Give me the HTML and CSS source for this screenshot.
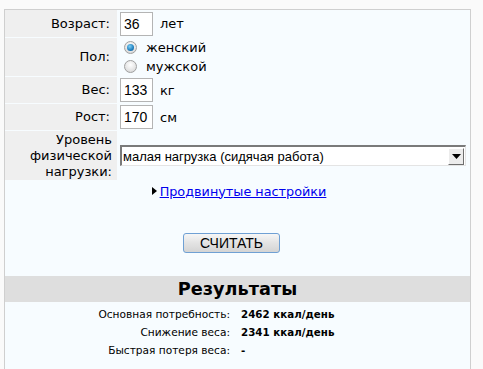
FILE: index.html
```html
<!DOCTYPE html>
<html lang="ru">
<head>
<meta charset="utf-8">
<title>Калькулятор калорий</title>
<link rel="stylesheet" href="styles.css">
</head>
<body>
<div class="panel">
  <div class="form">
    <div class="label">Возраст:</div>
    <div class="field"><span class="input">36</span><span class="unit">лет</span></div>

    <div class="label">Пол:</div>
    <div class="field radios">
      <div class="radio-row"><span class="radio checked"></span><span>женский</span></div>
      <div class="radio-row"><span class="radio"></span><span>мужской</span></div>
    </div>

    <div class="label">Вес:</div>
    <div class="field"><span class="input">133</span><span class="unit">кг</span></div>

    <div class="label">Рост:</div>
    <div class="field"><span class="input">170</span><span class="unit">см</span></div>

    <div class="label multi">Уровень<br>физической<br>нагрузки:</div>
    <div class="field">
      <div class="select"><span class="select-text">малая нагрузка (сидячая работа)</span><span class="select-btn"><svg width="9" height="5" viewBox="0 0 9 5"><polygon points="0,0 9,0 4.5,5" fill="#000"/></svg></span></div>
    </div>
  </div>

  <div class="advanced"><span class="tri"></span><a href="#" class="link">Продвинутые настройки</a></div>

  <div class="actions"><button class="btn">СЧИТАТЬ</button></div>

  <div class="results-head">Результаты</div>
  <div class="results">
    <div class="r-label">Основная потребность:</div><div class="r-value">2462 ккал/день</div>
    <div class="r-label">Снижение веса:</div><div class="r-value">2341 ккал/день</div>
    <div class="r-label">Быстрая потеря веса:</div><div class="r-value">-</div>
  </div>
</div>
</body>
</html>
```

FILE: styles.css
```css
html, body {
  margin: 0;
  padding: 0;
}
body {
  background: #fafafa;
  font-family: "DejaVu Sans", Verdana, sans-serif;
  font-size: 13px;
  color: #000;
  padding-top: 9px;
  padding-left: 4px;
  height: 360px;
  overflow: hidden;
}
.panel {
  width: 465px;
  background: #f7fcff;
  border: 1px solid #cfcfcf;
  border-bottom: none;
  padding-bottom: 40px;
}
.form {
  display: grid;
  grid-template-columns: 112px 1fr;
  grid-template-rows: 27px 38px 26px 26px 49px;
  row-gap: 1px;
}
.label {
  background: #efefef;
  display: flex;
  align-items: center;
  justify-content: flex-end;
  padding-right: 7px;
  text-align: right;
  line-height: 16px;
}
.label.multi {
  padding-right: 5px;
}
.field {
  display: flex;
  align-items: center;
  padding-left: 3px;
}
.input {
  box-sizing: border-box;
  width: 33px;
  height: 24px;
  border: 1px solid #b4b4b4;
  background: #fff;
  font-family: "Liberation Sans", Arial, sans-serif;
  font-size: 14px;
  line-height: 22px;
  padding-left: 3px;
}
.unit {
  margin-left: 7px;
}
.radios {
  flex-direction: column;
  align-items: flex-start;
  justify-content: center;
  padding-left: 7px;
}
.radio-row {
  display: flex;
  align-items: center;
  height: 19px;
}
.radio {
  box-sizing: border-box;
  width: 13px;
  height: 13px;
  border-radius: 50%;
  border: 1px solid #a0a0a0;
  background: radial-gradient(circle at 50% 35%, #ffffff 0%, #e2e2e2 65%, #c8c8c8 100%);
  margin-right: 9px;
  position: relative;
}
.radio.checked::after {
  content: "";
  position: absolute;
  left: 2px;
  top: 2px;
  width: 7px;
  height: 7px;
  border-radius: 50%;
  background: radial-gradient(circle at 40% 35%, #7fd0f5 0%, #1e7fbf 60%, #0c4f86 100%);
}
.select {
  box-sizing: border-box;
  width: 346px;
  height: 21px;
  display: flex;
  align-items: center;
  background: #fff;
  border-top: 2px solid #7a7a7a;
  border-left: 2px solid #7a7a7a;
  border-right: 1px solid #e4e4e4;
  border-bottom: 1px solid #e4e4e4;
  font-family: "Liberation Sans", Arial, sans-serif;
  font-size: 13px;
}
.select-text {
  flex: 1;
  padding-left: 1px;
}
.select-btn {
  box-sizing: border-box;
  width: 16px;
  height: 17px;
  margin-right: 1px;
  background: #ececec;
  border-top: 1px solid #fff;
  border-left: 1px solid #fff;
  border-right: 1px solid #6e6e6e;
  border-bottom: 1px solid #6e6e6e;
  display: flex;
  align-items: center;
  justify-content: center;
}
.advanced {
  display: flex;
  align-items: center;
  justify-content: center;
  margin-top: 3px;
  height: 16px;
  padding-left: 3px;
  font-size: 12.8px;
}
.tri {
  width: 0;
  height: 0;
  border-top: 4px solid transparent;
  border-bottom: 4px solid transparent;
  border-left: 5px solid #000;
  margin-right: 3px;
}
.link {
  color: #0000ee;
  text-decoration: underline;
}
.actions {
  display: flex;
  justify-content: center;
  padding-right: 12px;
  margin-top: 34px;
}
.btn {
  box-sizing: border-box;
  width: 97px;
  height: 20px;
  border: 1px solid #6fa0d4;
  border-radius: 3px;
  background: linear-gradient(#f6f6f6, #e3e3e3 50%, #d4d4d4);
  font-family: "Liberation Sans", Arial, sans-serif;
  font-size: 14px;
  color: #000;
  padding: 0;
  line-height: 17px;
}
.results-head {
  margin-top: 23px;
  height: 26px;
  background: #dedede;
  text-align: center;
  font-weight: bold;
  font-size: 17.7px;
  line-height: 26px;
}
.results {
  display: grid;
  grid-template-columns: 225px 1fr;
  column-gap: 11px;
  grid-auto-rows: 18px;
  padding-top: 3px;
  font-size: 10.6px;
  line-height: 18px;
}
.r-label {
  text-align: right;
}
.r-value {
  font-weight: bold;
  font-size: 10.3px;
}
```
